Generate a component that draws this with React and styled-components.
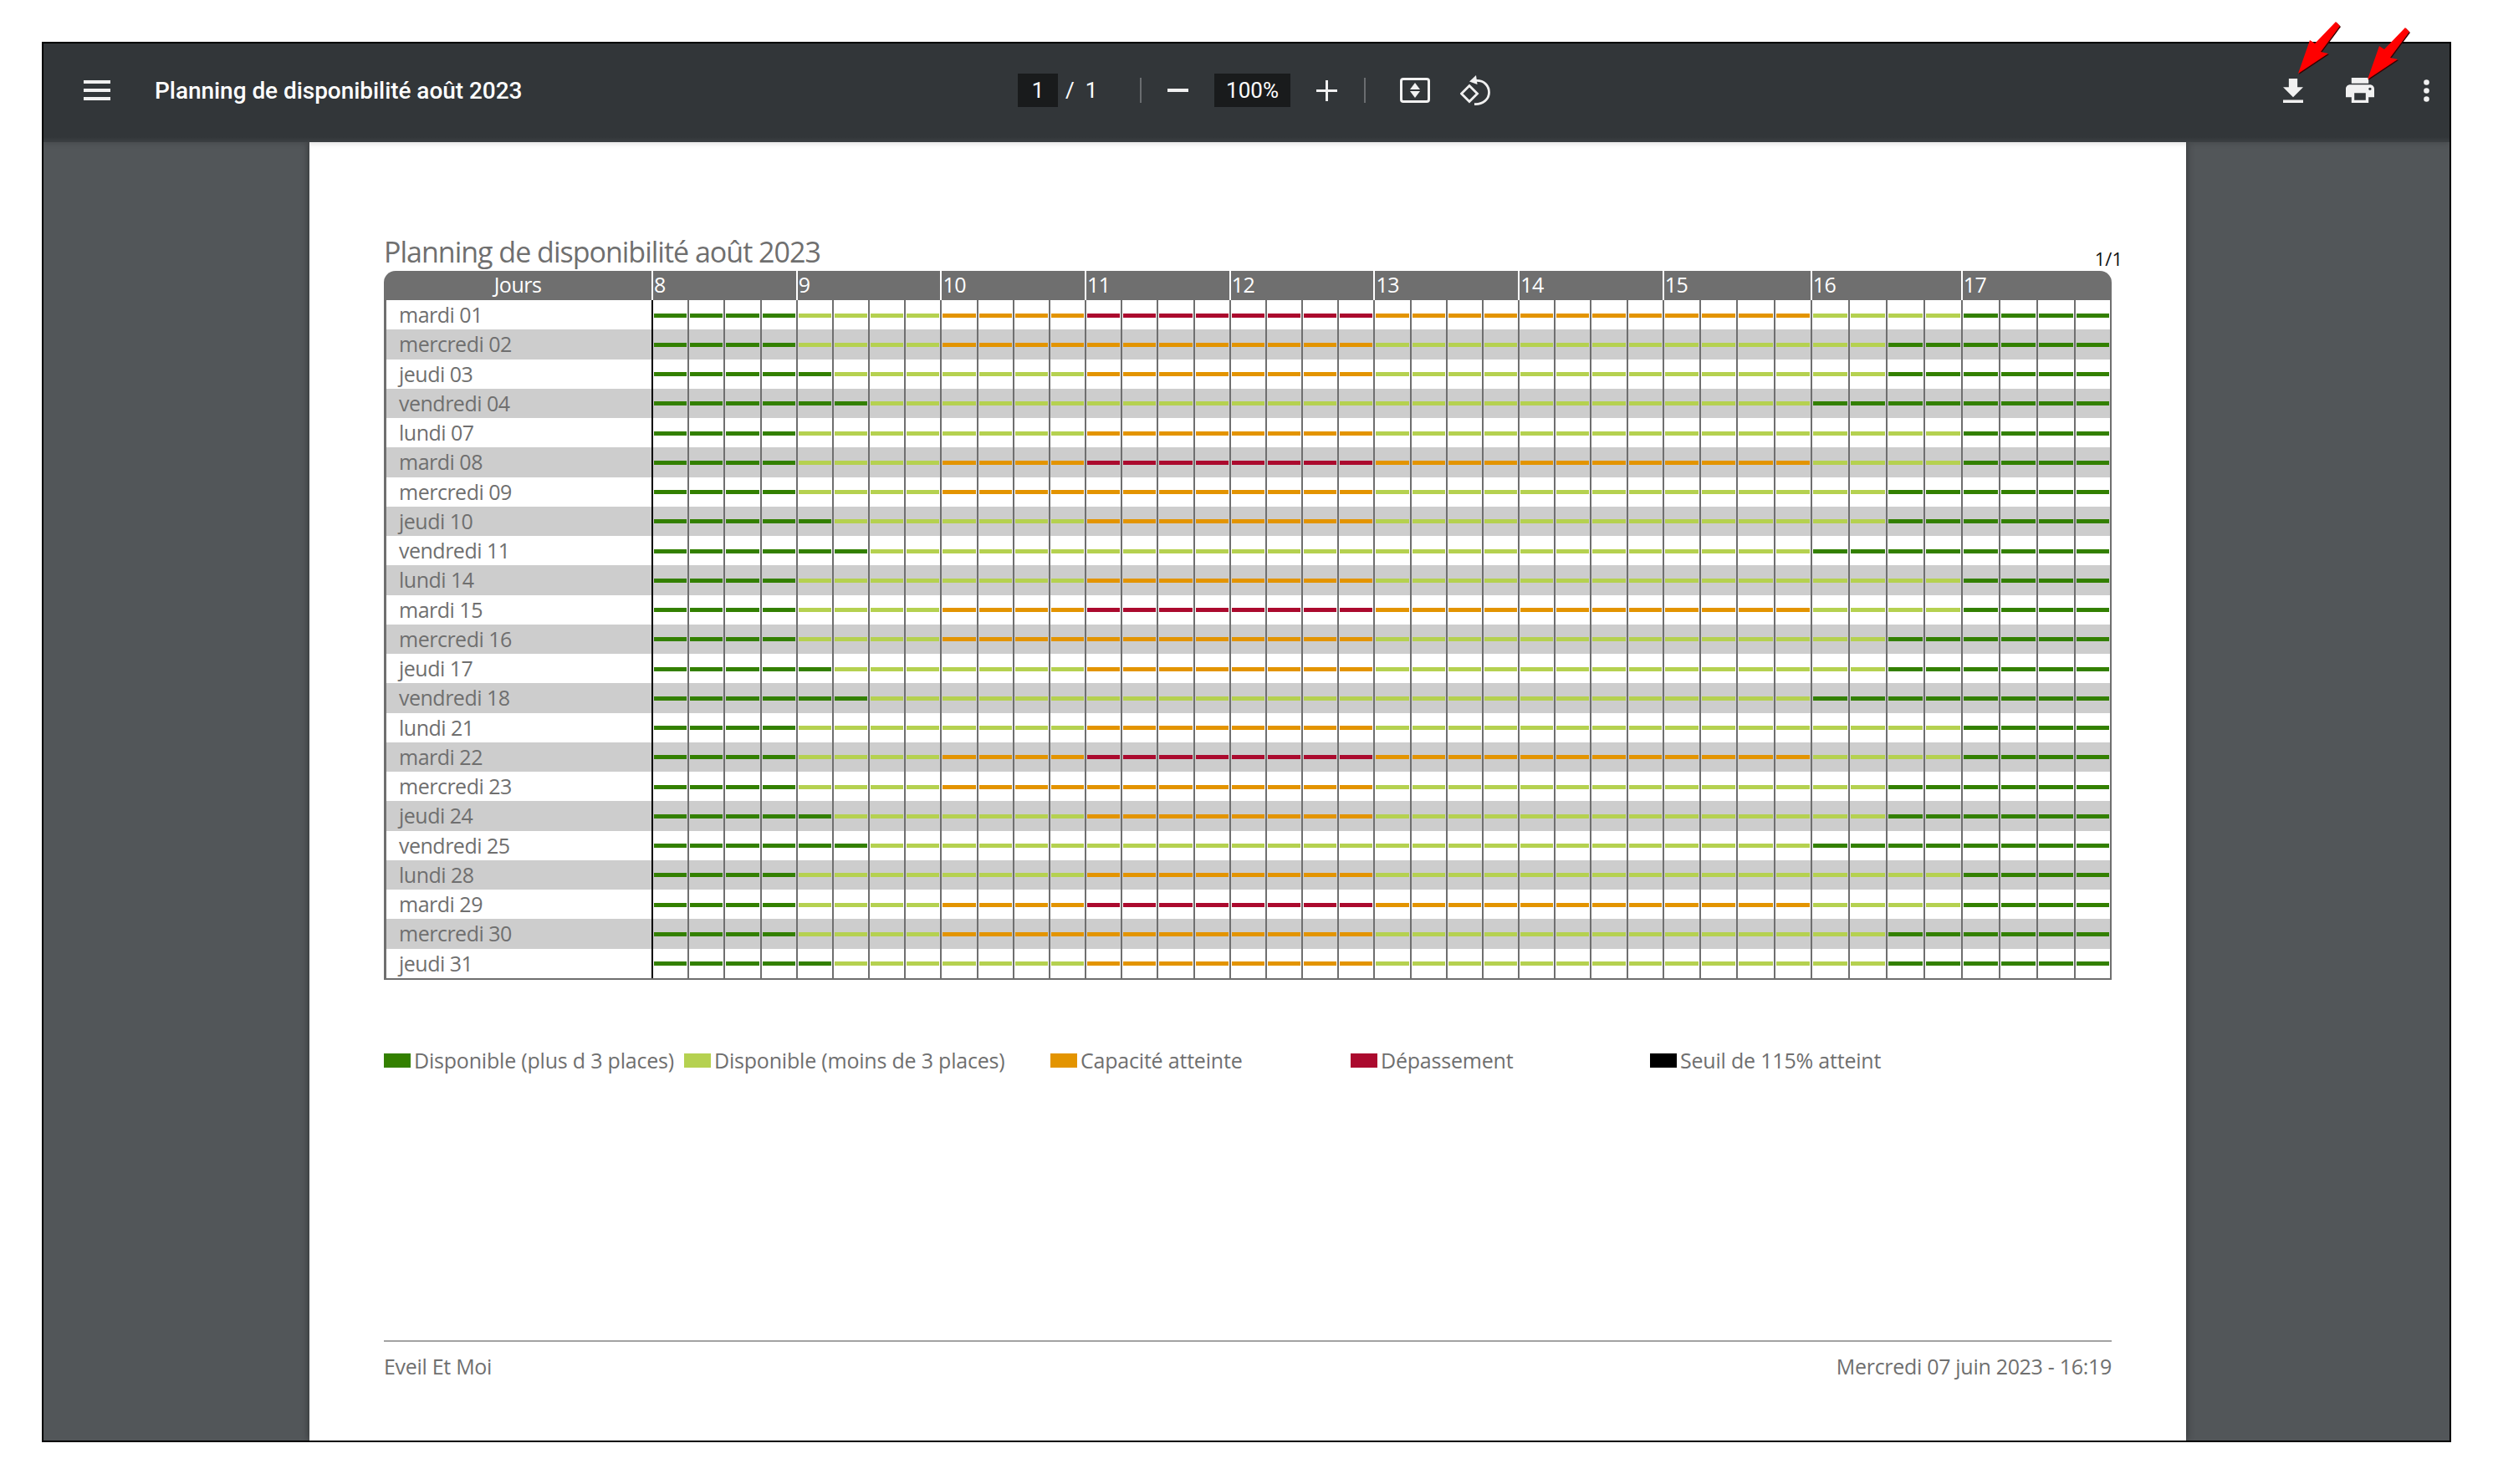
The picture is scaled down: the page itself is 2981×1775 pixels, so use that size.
import React from "react";
import styled, { createGlobalStyle } from "styled-components";

const GlobalStyle = createGlobalStyle`
  html, body { margin: 0; padding: 0; background: #fff; }
  #root { width: 2981px; height: 1775px; overflow: hidden; }
`;

const SLOT_COLUMNS = "320px repeat(28, 43.18px) repeat(4, 44.25px) repeat(4, 45px) repeat(4, 45px)";
const DOC_FONT = `"Open Sans", "Noto Sans", sans-serif`;

const COLORS = { g: "#338000", l: "#b5d150", o: "#e39400", r: "#ab0a2e" };

const Scene = styled.div`
  position: relative;
  width: 2981px;
  height: 1775px;
  padding: 50px;
  box-sizing: border-box;
  background: #fff;
`;

const Viewer = styled.div`
  width: 2881px;
  height: 1675px;
  box-sizing: border-box;
  border: 2px solid #000;
  background: #525659;
  display: flex;
  flex-direction: column;
  overflow: hidden;
`;

const Toolbar = styled.header`
  position: relative;
  z-index: 2;
  flex: 0 0 118px;
  box-sizing: border-box;
  padding-bottom: 6px;
  display: flex;
  align-items: center;
  color: #f1f1f1;
  font-family: Roboto, sans-serif;
  background: linear-gradient(#323639 0, #323639 112px, #3c4043 118px);
  box-shadow: 0 2px 6px rgba(0, 0, 0, 0.12);
`;

const LeftGroup = styled.div`
  flex: 0 0 1165px;
  display: flex;
  align-items: center;
  padding-left: 48px;
  box-sizing: border-box;
`;

const DocName = styled.div`
  margin-left: 53px;
  font-size: 28px;
  font-weight: 500;
  letter-spacing: -0.05px;
  color: #fff;
  white-space: nowrap;
`;

const NumberBox = styled.div`
  flex: 0 0 ${(p) => p.$w}px;
  height: 40px;
  margin-left: ${(p) => p.$ml || 0}px;
  background: #191b1c;
  color: #fff;
  display: flex;
  align-items: center;
  justify-content: center;
  font-size: 26px;
`;

const PageCount = styled.div`
  flex: 0 0 98px;
  padding-left: 9px;
  box-sizing: border-box;
  font-size: 26px;
  color: #fff;
  white-space: pre;
`;

const Sep = styled.div`
  flex: 0 0 2px;
  height: 30px;
  background: #6a6d70;
  margin-left: ${(p) => p.$ml || 0}px;
`;

const Icon = styled.svg`
  display: block;
  flex: none;
  margin-left: ${(p) => p.$ml || 0}px;
  fill: #f1f1f1;
`;

const RightGroup = styled.div`
  margin-left: auto;
  padding-right: 24px;
  display: flex;
  align-items: center;
`;

const Arrow = styled.svg`
  position: absolute;
  left: ${(p) => p.$x}px;
  top: ${(p) => p.$y}px;
  z-index: 5;
  overflow: visible;
  filter: drop-shadow(1px 1px 0 #300);
`;

const Stage = styled.main`
  flex: 1;
  min-height: 0;
  padding-left: 318px;
`;

const Page = styled.section`
  width: 2244px;
  height: 1553px;
  box-sizing: border-box;
  padding: 108px 89px 0;
  background: #fff;
  box-shadow: 0 0 9px rgba(0, 0, 0, 0.45);
  color: #6f6f6f;
  font-family: ${DOC_FONT};
`;

const TitleRow = styled.div`
  height: 46px;
  display: flex;
  justify-content: space-between;
  align-items: flex-end;
`;

const Title = styled.h1`
  margin: 0;
  padding-top: 2px;
  font-size: 34px;
  font-weight: 400;
  line-height: 46px;
  letter-spacing: -1px;
  white-space: nowrap;
`;

const PageMark = styled.span`
  margin: 0 -13px 3px 0;
  font-size: 22px;
  line-height: 24px;
  color: #111;
`;

const Head = styled.div`
  display: grid;
  grid-template-columns: ${SLOT_COLUMNS};
  height: 35px;
  background: #6f6f6f;
  border-radius: 14px 14px 0 0;
  color: #fff;
  font-size: 25px;
  line-height: 33px;
  overflow: hidden;
`;

const HeadDay = styled.div`
  text-align: center;
  letter-spacing: -0.5px;
`;

const HeadHour = styled.div`
  grid-column: span 4;
  border-left: 2px solid #fff;
  padding-left: 1px;
  letter-spacing: -0.5px;
`;

const Body = styled.div`
  border-bottom: 2px solid #6f6f6f;
`;

const Row = styled.div`
  display: grid;
  grid-template-columns: ${SLOT_COLUMNS};
  height: 35.25px;
  background: ${(p) => (p.$odd ? "#cdcdcd" : "#fff")};
`;

const DayName = styled.div`
  border-left: 3px solid #6f6f6f;
  padding-left: 15px;
  font-size: 25px;
  line-height: 34px;
  letter-spacing: -0.5px;
  white-space: nowrap;
`;

const Slot = styled.div`
  display: flex;
  align-items: center;
  padding: 0 1px;
  border-left: 2px solid ${(p) => (p.$first ? "#000" : "#6f6f6f")};
  border-right: ${(p) => (p.$last ? "2px solid #6f6f6f" : "0")};
`;

const Dash = styled.div`
  flex: 1;
  height: 5px;
  margin-top: 1px;
  background: ${(p) => COLORS[p.$c]};
`;

const Legend = styled.div`
  display: grid;
  grid-template-columns: 359px 438px 359px 358px auto;
  margin-top: 81px;
  font-size: 25px;
  line-height: 30px;
  letter-spacing: -0.2px;
`;

const LegendItem = styled.div`
  display: flex;
  align-items: center;
  gap: 4px;
  white-space: nowrap;
`;

const Swatch = styled.i`
  flex: 0 0 32px;
  height: 17px;
  margin-top: 2px;
  background: ${(p) => p.$c};
`;

const Footer = styled.footer`
  margin-top: 320px;
  padding-top: 13px;
  border-top: 2px solid #a2a2a2;
  display: flex;
  justify-content: space-between;
  font-size: 25px;
  line-height: 32px;
  letter-spacing: -0.3px;
`;

const run = (...parts) => parts.flatMap(([c, n]) => Array(n).fill(c));

const PATTERNS = {
  mardi: run(["g", 4], ["l", 4], ["o", 4], ["r", 8], ["o", 12], ["l", 4], ["g", 4]),
  mercredi: run(["g", 4], ["l", 4], ["o", 12], ["l", 14], ["g", 6]),
  jeudi: run(["g", 5], ["l", 7], ["o", 8], ["l", 14], ["g", 6]),
  vendredi: run(["g", 6], ["l", 26], ["g", 8]),
  lundi: run(["g", 4], ["l", 8], ["o", 8], ["l", 16], ["g", 4]),
};

const DAYS = [
  "mardi 01", "mercredi 02", "jeudi 03", "vendredi 04", "lundi 07", "mardi 08",
  "mercredi 09", "jeudi 10", "vendredi 11", "lundi 14", "mardi 15", "mercredi 16",
  "jeudi 17", "vendredi 18", "lundi 21", "mardi 22", "mercredi 23", "jeudi 24",
  "vendredi 25", "lundi 28", "mardi 29", "mercredi 30", "jeudi 31",
];

const HOURS = [8, 9, 10, 11, 12, 13, 14, 15, 16, 17];

const LEGEND = [
  ["#338000", "Disponible (plus d 3 places)"],
  ["#b5d150", "Disponible (moins de 3 places)"],
  ["#e39400", "Capacité atteinte"],
  ["#ab0a2e", "Dépassement"],
  ["#000", "Seuil de 115% atteint"],
];

const RedArrow = ({ x, y }) => (
  <Arrow $x={x} $y={y} width="50" height="62" viewBox="0 0 50 62">
    <polygon fill="#f00" points="0,62 14,22 20,26 45,0 50,5 27,36 36,38" />
  </Arrow>
);

const App = () => (
  <Scene>
    <GlobalStyle />
    <Viewer>
      <Toolbar>
        <LeftGroup>
          <Icon width="32" height="24" viewBox="3 6 18 12" preserveAspectRatio="none">
            <path d="M3 18h18v-2H3v2zm0-5h18v-2H3v2zm0-7v2h18V6H3z" />
          </Icon>
          <DocName>Planning de disponibilité août 2023</DocName>
        </LeftGroup>
        <NumberBox $w={48}>1</NumberBox>
        <PageCount>/  1</PageCount>
        <Sep />
        <Icon $ml={31} width="25" height="4" viewBox="0 0 25 4"><rect width="25" height="4" /></Icon>
        <NumberBox $w={91} $ml={31}>100%</NumberBox>
        <Icon $ml={31} width="25" height="25" viewBox="0 0 25 25"><path d="M11 0h3v11h11v3H14v11h-3V14H0v-3h11z" /></Icon>
        <Sep $ml={32} />
        <Icon $ml={41} width="36" height="30" viewBox="0 0 36 30">
          <rect x="1.5" y="1.5" width="33" height="27" rx="2.5" fill="none" stroke="#f1f1f1" strokeWidth="3" />
          <path d="M18 6l6 8H12zM18 24l-6-8h12z" />
        </Icon>
        <Icon $ml={36} width="36" height="36" viewBox="0 0 36 36">
          <path d="M11 12.5L20.5 22 11 31.5 1.5 22z" fill="none" stroke="#f1f1f1" strokeWidth="2.8" />
          <path d="M19 6.5C28 6 34.5 12 34.5 20.5S27 35 17 34.5" fill="none" stroke="#f1f1f1" strokeWidth="2.8" />
          <path d="M19 0l-8 7.5 9.5 3.5z" />
        </Icon>
        <RightGroup>
          <Icon width="24" height="29" viewBox="5 3 14 17" preserveAspectRatio="none">
            <path d="M19 9h-4V3H9v6H5l7 7 7-7zM5 18v2h14v-2H5z" />
          </Icon>
          <Icon $ml={51} width="34" height="30" viewBox="2 3 20 18" preserveAspectRatio="none">
            <path d="M19 8H5c-1.66 0-3 1.34-3 3v6h4v4h12v-4h4v-6c0-1.66-1.34-3-3-3zm-3 11H8v-5h8v5zm3-7c-.55 0-1-.45-1-1s.45-1 1-1 1 .45 1 1-.45 1-1 1zm-1-9H6v4h12V3z" />
          </Icon>
          <Icon $ml={59} width="7" height="27" viewBox="0 0 7 27">
            <circle cx="3.5" cy="3.5" r="3.3" /><circle cx="3.5" cy="13.5" r="3.3" /><circle cx="3.5" cy="23.5" r="3.3" />
          </Icon>
        </RightGroup>
      </Toolbar>
      <Stage>
        <Page>
          <TitleRow>
            <Title>Planning de disponibilité août 2023</Title>
            <PageMark>1/1</PageMark>
          </TitleRow>
          <Head>
            <HeadDay>Jours</HeadDay>
            {HOURS.map((h) => <HeadHour key={h}>{h}</HeadHour>)}
          </Head>
          <Body>
            {DAYS.map((day, i) => (
              <Row key={day} $odd={i % 2 === 1}>
                <DayName>{day}</DayName>
                {PATTERNS[day.split(" ")[0]].map((c, s) => (
                  <Slot key={s} $first={s === 0} $last={s === 39}><Dash $c={c} /></Slot>
                ))}
              </Row>
            ))}
          </Body>
          <Legend>
            {LEGEND.map(([c, label]) => (
              <LegendItem key={label}><Swatch $c={c} />{label}</LegendItem>
            ))}
          </Legend>
          <Footer>
            <span>Eveil Et Moi</span>
            <span>Mercredi 07 juin 2023 - 16:19</span>
          </Footer>
        </Page>
      </Stage>
    </Viewer>
    <RedArrow x={2748} y={26} />
    <RedArrow x={2831} y={33} />
  </Scene>
);

export default App;
